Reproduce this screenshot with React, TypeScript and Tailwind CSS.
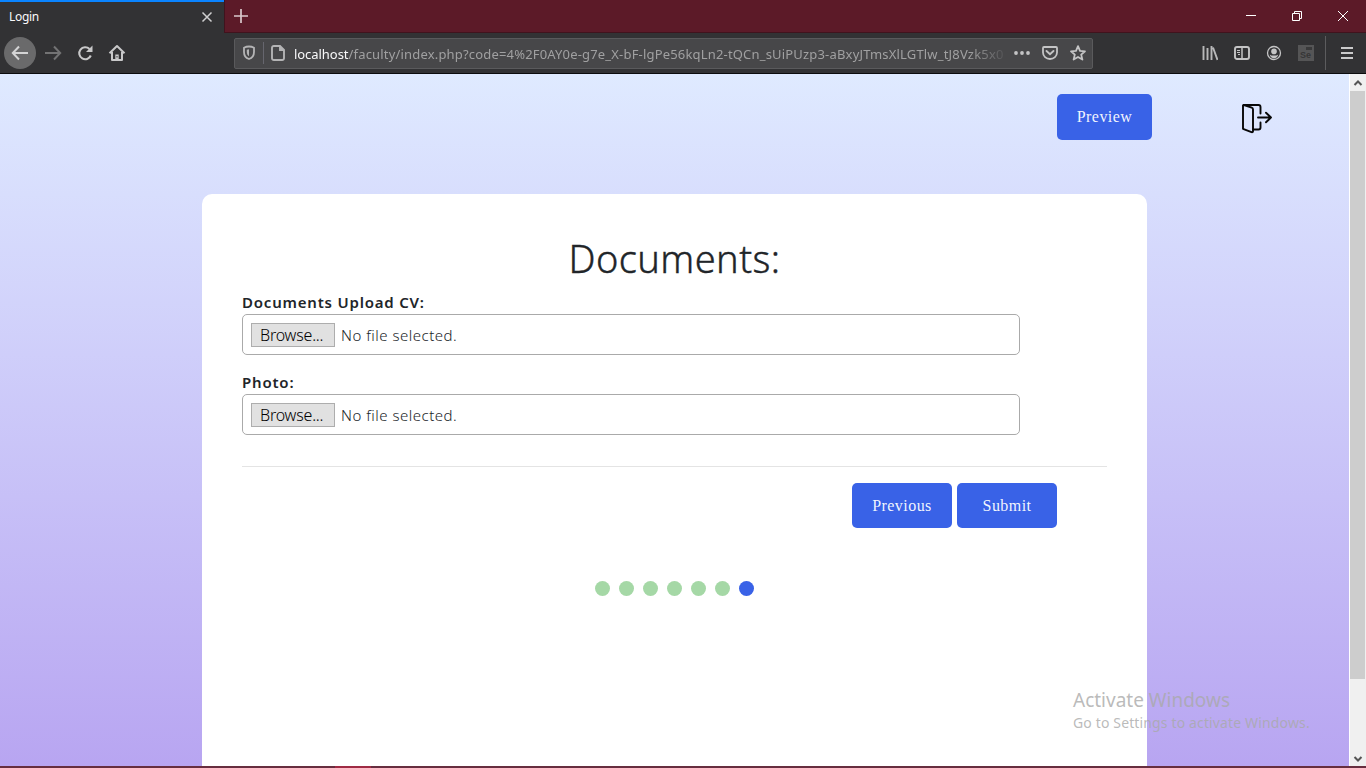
import React from "react";

function Svg({ w, h = w, className = "", children }: { w: number; h?: number; className?: string; children: React.ReactNode }) {
  return (
    <svg width={w} height={h} viewBox={`0 0 ${w} ${h}`} fill="none" className={`block shrink-0 ${className}`}>
      {children}
    </svg>
  );
}

function TitleBar() {
  return (
    <div className="flex h-[33px] shrink-0 bg-[#5c1a28]">
      <div className="flex w-[224px] items-center justify-between border-t-2 border-[#0a84ff] bg-[#323234] pr-[11px] pb-px pl-[9px]">
        <span className="text-[12px] leading-4 tracking-[-0.3px] text-[#f9f9fa]">Login</span>
        <Svg w={12}>
          <path d="M1.500 1.500l9 9M10.500 1.500l-9 9" stroke="#cfcfd0" strokeWidth="1.500" />
        </Svg>
      </div>
      <div className="flex flex-1 items-start border-b border-l border-[#40131d] pt-[9px] pl-[9px]">
        <Svg w={14}>
          <path d="M7 0v14M0 7h14" stroke="#d9c9cc" strokeWidth="1.700" />
        </Svg>
      </div>
      <div className="flex w-[140px] items-start border-b border-[#40131d] pt-[10px]">
        <Svg w={12} className="ml-[19px]">
          <path d="M1 5.500h10" stroke="#fff" />
        </Svg>
        <Svg w={12} className="ml-[34px]">
          <path d="M1.500 3.500h7v7h-7zM3.500 3v-1.500h7v7H9" stroke="#fff" />
        </Svg>
        <Svg w={12} className="ml-[34px]">
          <path d="M1 1l10 10M11 1L1 11" stroke="#fff" />
        </Svg>
      </div>
    </div>
  );
}

function UrlBar() {
  return (
    <div className="ml-[108px] flex h-[31px] w-[859px] items-center rounded-[2px] border border-[#5a5a5c] bg-[#474749] pl-[7px]">
      <Svg w={14} h={16}>
        <path d="M7 1.500c1.800 0 3.600.5 5 1.300v4.200c0 3.200-1.700 6-5 7-3.300-1-5-3.800-5-7V2.800C3.400 2 5.200 1.500 7 1.500z" stroke="#b4b4b5" strokeWidth="1.800" />
        <path d="M7 4.300v6.900C5.500 10.300 4.800 8.700 4.800 7V4.800z" fill="#b4b4b5" />
      </Svg>
      <div className="mx-[7px] h-[22px] w-px bg-[#66666e]" />
      <Svg w={14} h={16}>
        <path d="M3 1h6l4 4v8.200a1.800 1.800 0 0 1-1.800 1.800H2.800A1.800 1.800 0 0 1 1 13.200V2.800A1.800 1.800 0 0 1 2.800 1zM9 1.500V5h3.800" stroke="#b4b4b5" strokeWidth="1.900" />
      </Svg>
      <div className="ml-[9px] flex h-6 w-[712px] items-center pt-px [mask-image:linear-gradient(to_right,black_675px,transparent_716px)]">
        <span className="block text-[13px] leading-6 tracking-[0.18px] whitespace-nowrap text-[#a0a0a1]">
          <span className="tracking-[-0.05px] text-[#f9f9fa]">localhost</span>
          /faculty/index.php?code=4%2F0AY0e-g7e_X-bF-lgPe56kqLn2-tQCn_sUiPUzp3-aBxyJTmsXlLGTlw_tJ8Vzk5x0
        </span>
      </div>
      <Svg w={16} className="ml-[8px]">
        <g fill="#c4c4c5">
          <circle cx="2" cy="8" r="1.900" />
          <circle cx="8" cy="8" r="1.900" />
          <circle cx="14" cy="8" r="1.900" />
        </g>
      </Svg>
      <Svg w={16} className="ml-[12px]">
        <path d="M2 2h12c.6 0 1 .4 1 1v4.500a7 6.500 0 0 1-14 0V3c0-.6.4-1 1-1z" stroke="#c4c4c5" strokeWidth="1.800" />
        <path d="M4.500 6L8 9.200 11.500 6" stroke="#c4c4c5" strokeWidth="1.900" strokeLinecap="round" />
      </Svg>
      <Svg w={16} className="ml-[12px]">
        <path d="M8 1.200l2 4.700 5 .4-3.800 3.300 1.200 5L8 12l-4.400 2.600 1.200-5L1 6.300l5-.4z" stroke="#c4c4c5" strokeWidth="1.800" strokeLinejoin="round" />
      </Svg>
    </div>
  );
}

function NavBar() {
  return (
    <div className="flex h-[41px] shrink-0 items-center border-b border-[#0c0c0d] bg-[#323234] pl-[4px]">
      <div className="flex size-8 items-center justify-center rounded-full bg-[#6a6a6b]">
        <Svg w={18}>
          <path d="M17 9H2M8 2.500L1.800 9 8 15.500" stroke="#d4d4d5" strokeWidth="2" />
        </Svg>
      </div>
      <Svg w={18} className="ml-[8px]">
        <path d="M1 9h15M10 2.500L16.200 9 10 15.500" stroke="#737374" strokeWidth="2" />
      </Svg>
      <Svg w={18} className="ml-[14px]">
        <path d="M14.800 11.500A6 6 0 1 1 13.500 5" stroke="#c8c8c9" strokeWidth="2.100" />
        <path d="M16.500 1.500V8H10z" fill="#c8c8c9" />
      </Svg>
      <Svg w={18} className="ml-[14px]">
        <path d="M1.500 9.300L9 2l7.500 7.300M4 8v8h10V8" stroke="#c8c8c9" strokeWidth="2" strokeLinejoin="round" />
        <path d="M7.300 16v-5.500h3.400V16" fill="#c8c8c9" />
        <path d="M9 12v1.500" stroke="#323234" />
      </Svg>
      <UrlBar />
      <Svg w={16} className="ml-[109px]">
        <path d="M1.500 1v14M5.500 3v12M9.500 1v14M11 2.500l4.500 12.500" stroke="#b8b8b9" strokeWidth="1.900" />
      </Svg>
      <Svg w={16} className="ml-[16px]">
        <rect x="1" y="2" width="14" height="12" rx="2" stroke="#c4c4c5" strokeWidth="1.900" />
        <path d="M8 2v12" stroke="#c4c4c5" strokeWidth="1.500" />
        <path d="M3 5.500h3M3 7.500h3M4 9.500h2" stroke="#c4c4c5" />
      </Svg>
      <Svg w={16} className="ml-[16px]">
        <circle cx="8" cy="8" r="6.500" stroke="#c4c4c5" strokeWidth="1.300" />
        <circle cx="8" cy="6.400" r="2.800" fill="#c4c4c5" />
        <path d="M3.800 9.500c1 .8 1.500 1 2.300 1h3.800c.8 0 1.300-.2 2.300-1-.4 2.200-2 3.700-4.200 3.700S4.200 11.700 3.800 9.500z" fill="#c4c4c5" />
      </Svg>
      <div className="ml-[16px] flex size-4 flex-col bg-[#555556]">
        <span className="mt-[2px] mr-[2px] h-[3px] w-[6px] self-end bg-[#39393a]" />
        <span className="pl-[2px] font-['Liberation_Sans'] text-[9px] leading-[11px] font-bold text-[#363637]">Se</span>
      </div>
      <div className="ml-[11px] h-[34px] w-px bg-[#5c5c5e]" />
      <Svg w={12} h={14} className="ml-[15px]">
        <path d="M0 2h12M0 7h12M0 12h12" stroke="#cacacb" strokeWidth="2" />
      </Svg>
    </div>
  );
}

function FileField({ label }: { label: string }) {
  return (
    <div className="mb-[16px] flex flex-col">
      <label className="h-[23px] text-[15px] leading-[23px] font-semibold tracking-[0.8px] text-[#212529]">{label}</label>
      <div className="flex h-[41px] w-[778px] items-center rounded-[5px] border border-[#aaa] pl-[8px]">
        <button className="flex h-6 w-[84px] items-center border border-[#adadad] bg-[#e1e1e1] pl-[8px] text-[16px] leading-5 font-light tracking-[-0.2px] text-black">
          Browse...
        </button>
        <span className="ml-[6px] text-[15px] leading-5 font-light tracking-[0.5px] text-[#212529]">No file selected.</span>
      </div>
    </div>
  );
}

function ActionButton({ children, className }: { children: string; className: string }) {
  return (
    <button className={`flex items-center justify-center rounded-[5px] bg-[#3962e7] font-['Liberation_Serif'] text-[16px] tracking-[0.45px] text-white/95 ${className}`}>
      {children}
    </button>
  );
}

function Scrollbar() {
  return (
    <div className="flex w-[17px] shrink-0 flex-col items-center border-l border-white bg-[#f0f0f0]">
      <Svg w={16} h={17}>
        <path d="M4.500 11L8 7.500l3.500 3.500" stroke="#555" strokeWidth="2" />
      </Svg>
      <div className="mr-px h-[588px] w-[15px] bg-[#cdcdcd]" />
      <Svg w={16} h={17} className="mt-auto">
        <path d="M4.500 8L8 11.500 11.500 8" stroke="#555" strokeWidth="2" />
      </Svg>
    </div>
  );
}

export default function App() {
  return (
    <div className="relative flex h-[768px] w-[1366px] flex-col overflow-hidden font-['Noto_Sans',sans-serif]">
      <TitleBar />
      <NavBar />
      <div className="flex h-[692px] shrink-0">
        <main className="flex w-[1349px] flex-col bg-linear-to-b from-[#dfeaff] to-[#b8a5f1]">
          <div className="flex h-[120px] shrink-0 items-start justify-end pt-5 pr-[77px]">
            <ActionButton className="h-[46px] w-[95px]">Preview</ActionButton>
            <Svg w={32} className="mt-[9px] ml-[88px]">
              <g stroke="#080808" strokeWidth="1.900" strokeLinejoin="round" strokeLinecap="round">
                <path d="M3 2.500v23.300l8.500 3.400c1 .3 1.500-.2 1.500-1V6.500c0-1-.5-1.500-1.300-1.800L4 2z" />
                <path d="M3.500 2h15c1.400 0 2 .6 2 2v6.500M20.500 19.500v5c0 1.300-.7 2-2 2H13.500M18 14.500h13M26 9.700l5 4.800-5 4.800" />
              </g>
            </Svg>
          </div>
          <section className="mx-auto flex w-[945px] flex-1 flex-col rounded-t-[10px] bg-white px-10 pt-[39px]">
            <h1 className="h-[58px] text-center text-[38px] leading-[50px] font-light tracking-[0.4px] text-[#212529] [-webkit-text-stroke:0.4px_#212529]">Documents:</h1>
            <FileField label="Documents Upload CV:" />
            <FileField label="Photo:" />
            <div className="mt-[15px] h-px w-full bg-[#e4e4e4]" />
            <div className="mt-4 mr-[50px] flex justify-end gap-[5px]">
              <ActionButton className="h-[45px] w-[100px]">Previous</ActionButton>
              <ActionButton className="h-[45px] w-[100px]">Submit</ActionButton>
            </div>
            <div className="mt-[53px] flex justify-center gap-[9px]">
              {[0, 1, 2, 3, 4, 5].map((i) => (
                <span key={i} className="size-[15px] rounded-full bg-[#a5d8a6]" />
              ))}
              <span className="size-[15px] rounded-full bg-[#3962e7]" />
            </div>
          </section>
        </main>
        <Scrollbar />
      </div>
      <div className="flex h-[2px] shrink-0 bg-[#672e3f] pl-[335px]">
        <div className="w-9 bg-[#9f2b44]" />
      </div>
      <div className="pointer-events-none absolute top-[688px] left-[1073px] flex flex-col whitespace-nowrap text-[#a9a9a9]/80">
        <span className="text-[19px] leading-6">Activate Windows</span>
        <span className="text-[14px] leading-[22px] tracking-[0.14px]">Go to Settings to activate Windows.</span>
      </div>
    </div>
  );
}
